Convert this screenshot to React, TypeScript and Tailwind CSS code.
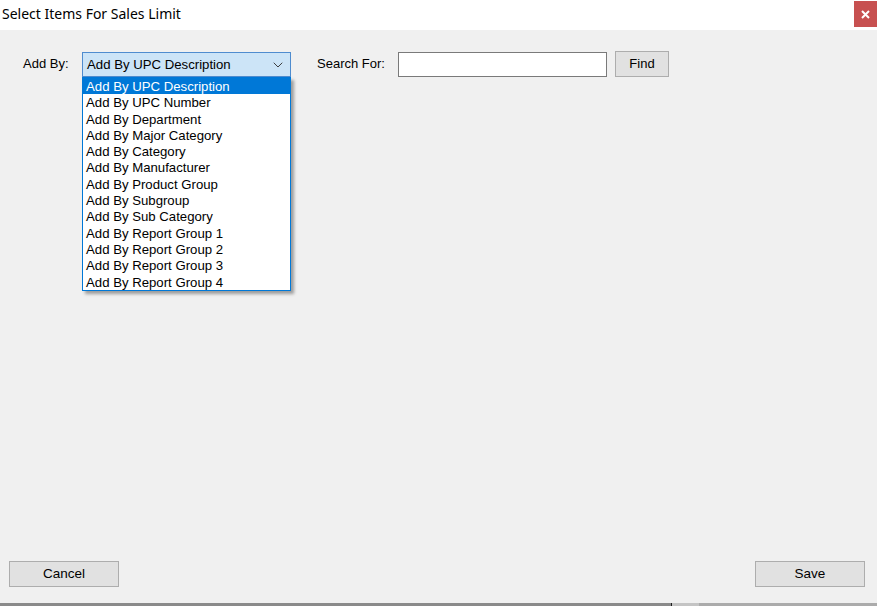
import { ChevronDown } from 'lucide-react';

const options = [
  'Add By UPC Description',
  'Add By UPC Number',
  'Add By Department',
  'Add By Major Category',
  'Add By Category',
  'Add By Manufacturer',
  'Add By Product Group',
  'Add By Subgroup',
  'Add By Sub Category',
  'Add By Report Group 1',
  'Add By Report Group 2',
  'Add By Report Group 3',
  'Add By Report Group 4',
];

export default function App() {
  return (
    <div className="w-[877px] h-[606px] flex flex-col overflow-hidden bg-[#f0f0f0] font-['Liberation_Sans',Arial,sans-serif] text-[13px] text-black">
      {/* title bar */}
      <div className="h-[30px] shrink-0 bg-white flex items-start justify-between">
        <span className="pl-[2px] pt-[4px] font-['Noto_Sans',sans-serif] text-[14px] leading-[20px] text-black">
          Select Items For Sales Limit
        </span>
        <div className="mt-[1px] w-[23px] h-[26px] bg-[#c75050] flex items-center justify-center text-white">
          <svg width="9" height="9" viewBox="0 0 9 9">
            <path d="M1 1 L8 8 M8 1 L1 8" stroke="white" strokeWidth="2" />
          </svg>
        </div>
      </div>

      {/* body */}
      <div className="relative flex-1 flex flex-col justify-between">
        <div className="flex items-center pt-[21px] pl-[23px]">
          <span className="w-[59px]">Add By:</span>
          <div className="w-[209px] h-[25px] border border-[#4f8ccf] bg-[#cce4f7] flex items-center justify-between pl-[4px] pr-[4px] pt-[1px]">
            <span className="text-[13.2px]">Add By UPC Description</span>
            <ChevronDown size={16} strokeWidth={1.4} className="text-[#333]" />
          </div>
          <span className="ml-[26px] w-[81px]">Search For:</span>
          <div className="w-[209px] h-[25px] border border-[#7a7a7a] bg-white" />
          <button className="ml-[8px] w-[54px] h-[26px] border border-[#adadad] bg-[#e1e1e1] text-[13px]">
            Find
          </button>
        </div>

        {/* open dropdown list */}
        <div className="absolute left-[82px] top-[47px] w-[209px] border border-[#0078d7] bg-white shadow-[3px_3px_3px_rgba(0,0,0,0.35)]">
          {options.map((o, i) => (
            <div
              key={o}
              className={`h-[16.3px] leading-[18px] pl-[3px] text-[13.2px] whitespace-nowrap ${
                i === 0 ? 'bg-[#0078d7] text-white' : 'text-black'
              }`}
            >
              {o}
            </div>
          ))}
        </div>

        <div className="flex justify-between px-[9px] pb-[16px] pr-[12px]">
          <button className="w-[110px] h-[26px] border border-[#adadad] bg-[#e1e1e1] text-[13.5px] pt-[1px]">Cancel</button>
          <button className="w-[110px] h-[26px] border border-[#adadad] bg-[#e1e1e1] text-[13.5px] pt-[1px]">Save</button>
        </div>
      </div>

      {/* bottom edge */}
      <div className="h-[3px] shrink-0 flex">
        <div className="w-[671px] bg-[#8a8a8a]" />
        <div className="w-[1px] bg-[#202020]" />
        <div className="w-[27px] bg-[#c4c4c4]" />
        <div className="flex-1 bg-[#ababab]" />
      </div>
    </div>
  );
}
